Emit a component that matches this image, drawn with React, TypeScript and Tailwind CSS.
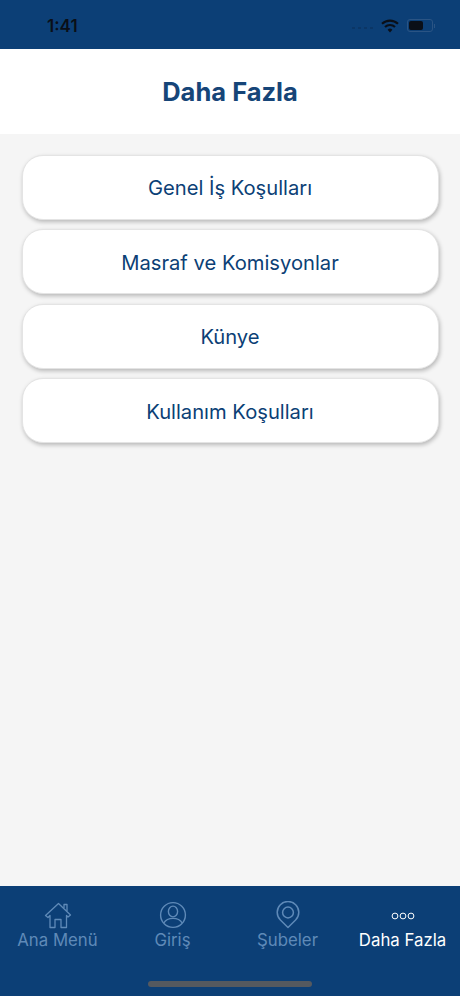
const menuItems = ["Genel İş Koşulları", "Masraf ve Komisyonlar", "Künye", "Kullanım Koşulları"];

const HomeIcon = () => (
  <svg width="28" height="27" viewBox="0 0 28 27" fill="none" stroke="currentColor" strokeWidth="1.3" strokeLinejoin="round">
    <path d="M1.5 13.5 14.5 1.5 26.5 13 24 15 22.5 13.5V25.5H17V17.5H11V25.5H6V13.5L4 15.5Z" />
    <path d="M20 6V2.5H23V9" />
  </svg>
);

const UserIcon = () => (
  <svg width="28" height="28" viewBox="0 0 28 28" fill="none" stroke="currentColor" strokeWidth="1.4">
    <circle cx="14" cy="14" r="12.4" />
    <ellipse cx="14" cy="10.5" rx="4.6" ry="5.4" />
    <path d="M4.8 22c2-3.4 5.4-4.6 9.2-4.6s7.2 1.2 9.2 4.6" />
  </svg>
);

const PinIcon = () => (
  <svg width="24" height="28" viewBox="0 0 24 28" fill="none" stroke="currentColor" strokeWidth="1.5">
    <path d="M12 26.5 4.4 19A10.8 10.8 0 1 1 19.6 19Z" strokeLinejoin="round" />
    <circle cx="12" cy="11.5" r="5.4" />
  </svg>
);

const DotsIcon = () => (
  <svg width="24" height="8" viewBox="0 0 24 8" fill="none" stroke="currentColor" strokeWidth="1" className="mt-[2px]">
    <circle cx="4" cy="4" r="2.9" />
    <circle cx="12" cy="4" r="2.9" />
    <circle cx="20" cy="4" r="2.9" />
  </svg>
);

const StatusBar = () => (
  <div className="h-[49px] bg-[#0c3f76] flex justify-between pl-[47px] pr-[25px] text-[#0a0f18] shrink-0">
    <span className="text-[17px] font-semibold leading-none mt-[18px]">1:41</span>
    <div className="flex items-center gap-[8px] mt-[1px] h-[49px]">
      <div className="flex gap-[3px] mt-[5px] opacity-40">
        <span className="w-[3px] h-[2px] bg-[#0a2a50]" />
        <span className="w-[3px] h-[2px] bg-[#0a2a50]" />
        <span className="w-[3px] h-[2px] bg-[#0a2a50]" />
        <span className="w-[3px] h-[2px] bg-[#0a2a50]" />
      </div>
      <svg width="18" height="14" viewBox="0 0 18 14" fill="none" stroke="currentColor" strokeWidth="2.2">
        <path d="M1 4.8a11.6 11.6 0 0 1 16 0" />
        <path d="M4 8a7.2 7.2 0 0 1 10 0" />
        <path d="M9 13.5 6.6 10.8a3.4 3.4 0 0 1 4.8 0Z" fill="currentColor" stroke="none" />
      </svg>
      <div className="flex items-center">
        <div className="w-[26px] h-[13px] rounded-[3px] border border-[#2a5484] p-[1px] flex">
          <div className="w-[14px] rounded-[2px] bg-[#0a0f18]" />
        </div>
        <span className="w-[1px] h-[4px] bg-[#2a5484] ml-[1px]" />
      </div>
    </div>
  </div>
);

const Tab = ({ label, active, children }: { label: string; active?: boolean; children: React.ReactNode }) => (
  <div className={`flex-1 flex flex-col items-center ${active ? "text-white" : "text-[#5f8ab8]"}`}>
    <div className="h-[30px] flex items-center justify-center">{children}</div>
    <span className="text-[16.8px] leading-[20px] whitespace-nowrap">{label}</span>
  </div>
);

export default function App() {
  return (
    <div className="w-[460px] h-[996px] flex flex-col bg-[#f5f5f5] overflow-hidden font-['Inter',sans-serif]">
      <StatusBar />

      <div className="h-[85px] bg-white flex items-center justify-center shrink-0">
        <h1 className="text-[25.5px] font-bold text-[#164578] leading-none">Daha Fazla</h1>
      </div>

      <div className="flex-1 px-[21.5px] pt-[21px] flex flex-col gap-[9.4px]">
        {menuItems.map((item) => (
          <button
            key={item}
            className="h-[65px] w-full pt-[2px] rounded-[21px] bg-white border border-[#e4e4e4] shadow-[1px_2px_4px_rgba(0,0,0,0.25)] text-[20.2px] text-[#0c3f76] flex items-center justify-center"
          >
            {item}
          </button>
        ))}
      </div>

      <div className="h-[110px] bg-[#0c3f76] shrink-0 relative pt-[14px] flex">
        <Tab label="Ana Menü"><HomeIcon /></Tab>
        <Tab label="Giriş"><UserIcon /></Tab>
        <Tab label="Şubeler"><PinIcon /></Tab>
        <Tab label="Daha Fazla" active><DotsIcon /></Tab>
        <div className="absolute left-[148px] bottom-[9px] w-[164px] h-[6px] rounded-full bg-[#55595f]" />
      </div>
    </div>
  );
}
